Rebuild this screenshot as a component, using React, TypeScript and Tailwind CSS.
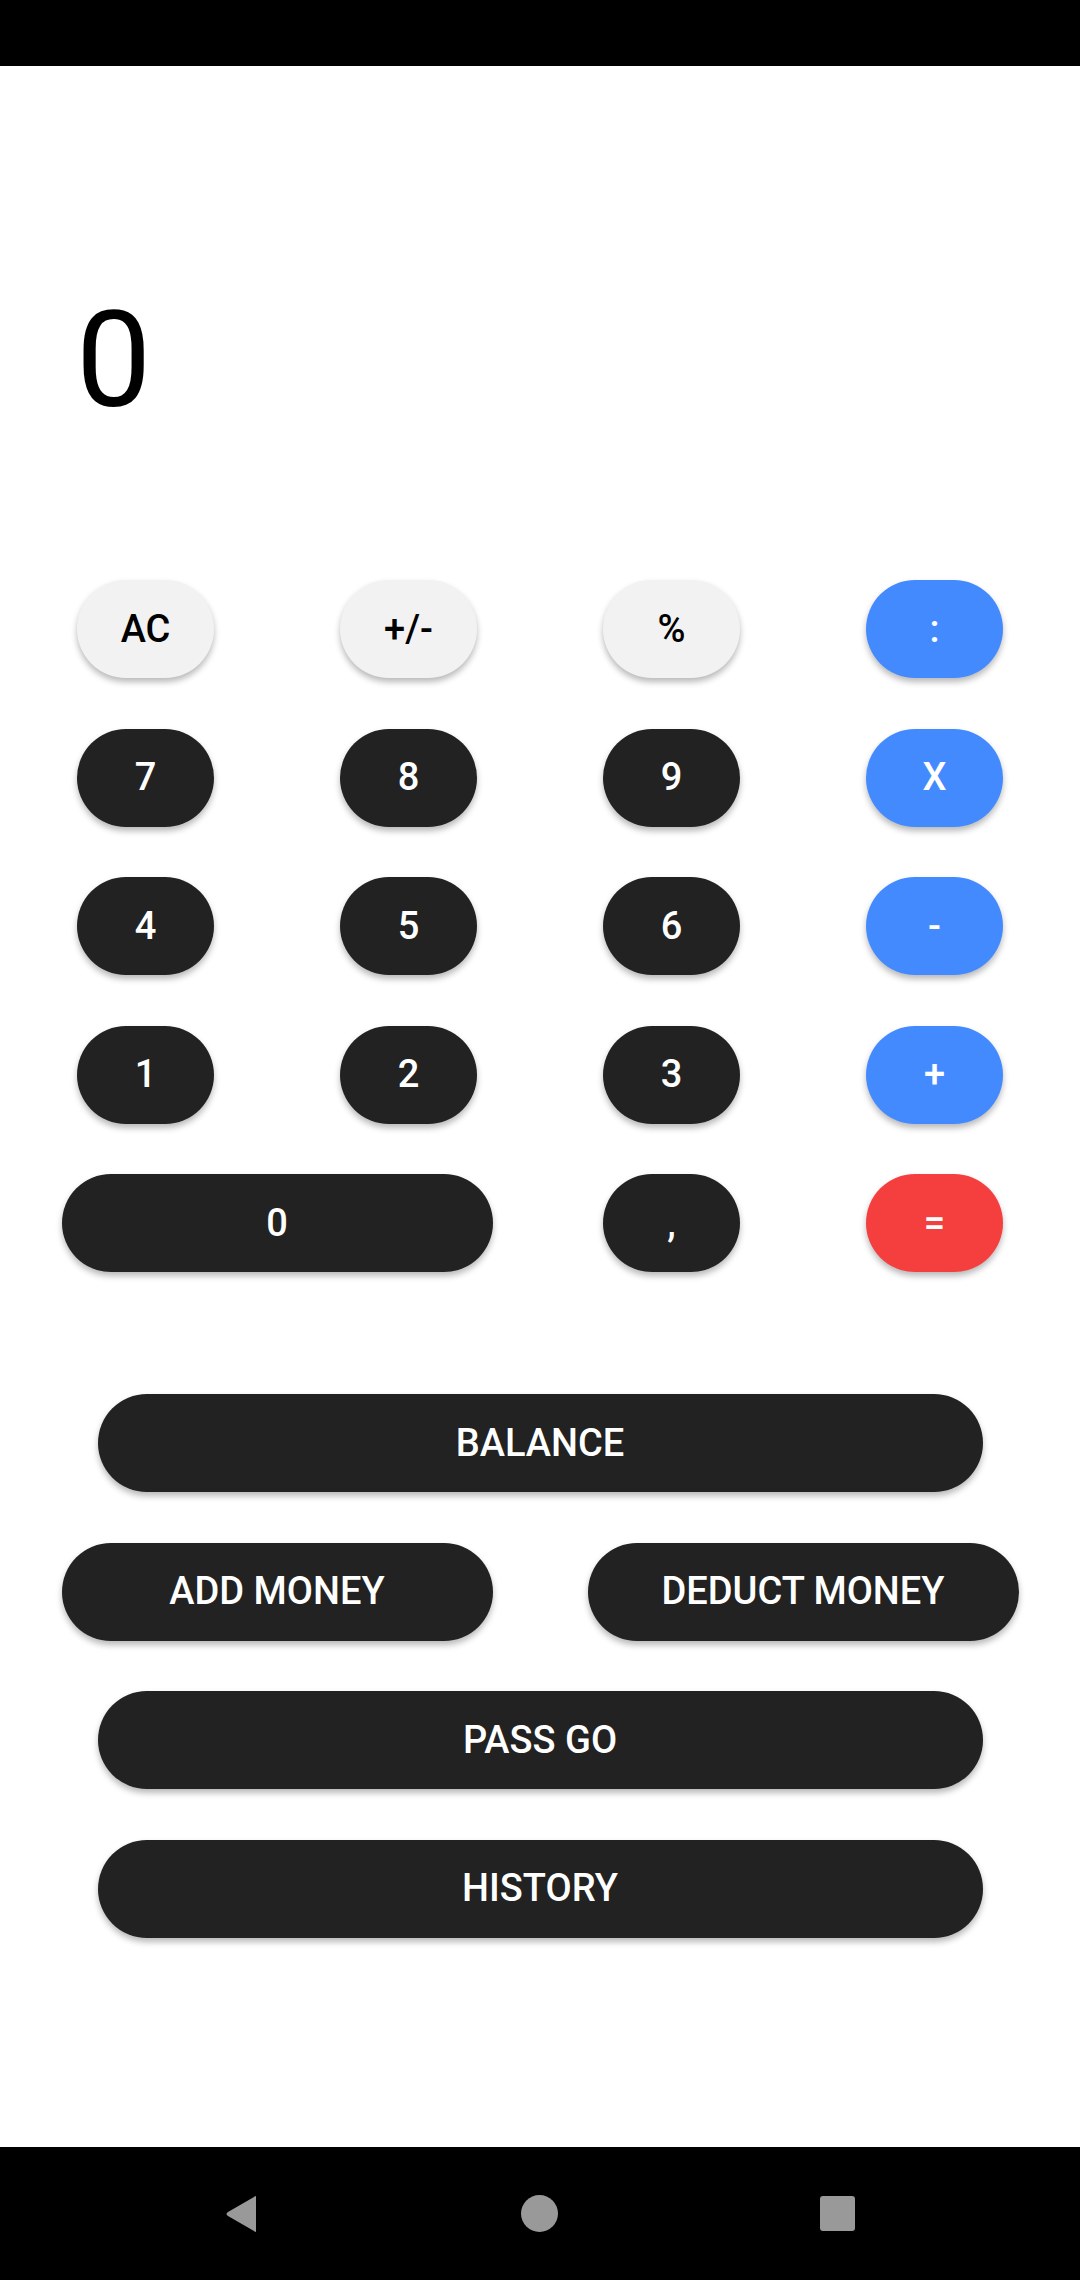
import React from "react";

type Variant = "light" | "dark" | "blue" | "red";

const variantClass: Record<Variant, string> = {
  light: "bg-[#f2f2f2] text-black",
  dark: "bg-[#222222] text-white",
  blue: "bg-[#448aff] text-white",
  red: "bg-[#f53e3e] text-white",
};

function Key({
  label,
  variant,
  wide = false,
}: {
  label: string;
  variant: Variant;
  wide?: boolean;
}) {
  return (
    <div
      className={
        wide
          ? "col-span-2 flex justify-center"
          : "flex justify-center"
      }
    >
      <button
        className={
          (wide ? "w-[431px] " : "w-[137px] ") +
          "h-[98px] rounded-full flex items-center justify-center text-[38px] font-medium shadow-[0_4px_6px_rgba(0,0,0,0.28)] " +
          variantClass[variant]
        }
      >
        {label}
      </button>
    </div>
  );
}

function ActionButton({ label, width }: { label: string; width: string }) {
  return (
    <button
      className={
        width +
        " h-[98px] rounded-full bg-[#222222] text-white text-[38px] font-medium flex items-center justify-center shadow-[0_4px_6px_rgba(0,0,0,0.28)]"
      }
    >
      {label}
    </button>
  );
}

export default function App() {
  return (
    <div
      className="w-[1080px] h-[2280px] bg-white flex flex-col overflow-hidden"
      style={{ fontFamily: "Roboto, 'Noto Sans', sans-serif" }}
    >
      <div className="h-[66px] bg-black shrink-0" />
      <div className="flex-1 flex flex-col">
        <div className="pt-[228px] pl-[76px] h-[514px]">
          <div className="text-[134px] leading-none text-black font-normal">0</div>
        </div>
        <div className="px-[14px] grid grid-cols-4 gap-y-[50.5px]">
          <Key label="AC" variant="light" />
          <Key label="+/-" variant="light" />
          <Key label="%" variant="light" />
          <Key label=":" variant="blue" />
          <Key label="7" variant="dark" />
          <Key label="8" variant="dark" />
          <Key label="9" variant="dark" />
          <Key label="X" variant="blue" />
          <Key label="4" variant="dark" />
          <Key label="5" variant="dark" />
          <Key label="6" variant="dark" />
          <Key label="-" variant="blue" />
          <Key label="1" variant="dark" />
          <Key label="2" variant="dark" />
          <Key label="3" variant="dark" />
          <Key label="+" variant="blue" />
          <Key label="0" variant="dark" wide />
          <Key label="," variant="dark" />
          <Key label="=" variant="red" />
        </div>
        <div className="mt-[122px] flex flex-col gap-[50.5px]">
          <div className="flex justify-center">
            <ActionButton label="BALANCE" width="w-[885px]" />
          </div>
          <div className="px-[14px] grid grid-cols-2">
            <div className="flex justify-center">
              <ActionButton label="ADD MONEY" width="w-[431px]" />
            </div>
            <div className="flex justify-center">
              <ActionButton label="DEDUCT MONEY" width="w-[431px]" />
            </div>
          </div>
          <div className="flex justify-center">
            <ActionButton label="PASS GO" width="w-[885px]" />
          </div>
          <div className="flex justify-center">
            <ActionButton label="HISTORY" width="w-[885px]" />
          </div>
        </div>
      </div>
      <div className="h-[133px] bg-black shrink-0 flex items-center justify-center">
        <div className="flex items-center justify-between w-[630px]">
          <svg width="34" height="38" viewBox="0 0 34 38">
            <path
              d="M31 2 L31 36 Q31 38 29 36 L3 21 Q0 19 3 17 L29 2 Q31 0 31 2 Z"
              fill="#999999"
            />
          </svg>
          <div className="w-[37px] h-[37px] rounded-full bg-[#999999]" />
          <div className="w-[35px] h-[35px] rounded-[3px] bg-[#999999]" />
        </div>
      </div>
    </div>
  );
}
